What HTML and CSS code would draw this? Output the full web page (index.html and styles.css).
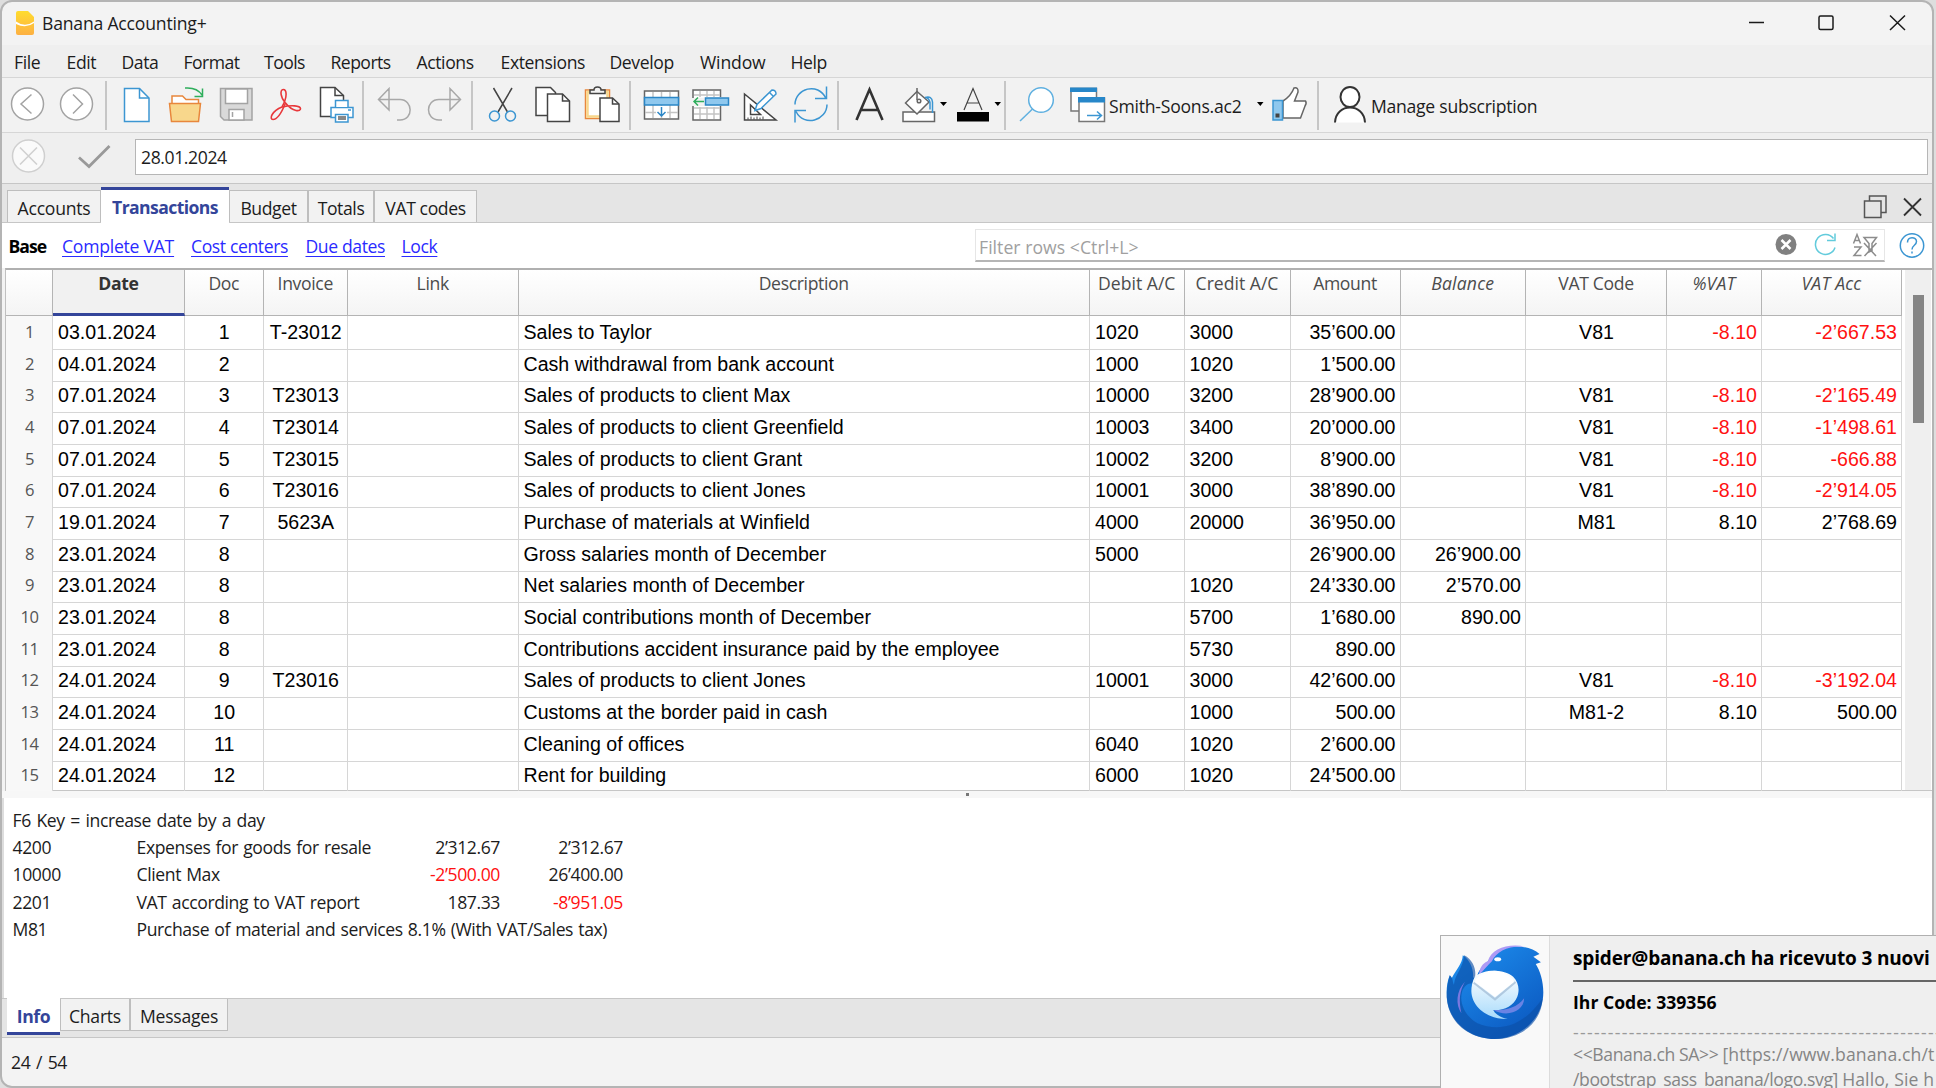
FILE: index.html
```html
<!DOCTYPE html>
<html lang="en">
<head>
<meta charset="utf-8">
<title>Banana Accounting+</title>
<link rel="stylesheet" href="styles.css">
</head>
<body>
<div class="window">
  <header class="titlebar">
    <svg class="logo" viewBox="15 9 20 26" width="20" height="26"><defs><linearGradient id="ban" x1="0" y1="0" x2="0" y2="1"><stop offset="0" stop-color="#ffdc2e"/><stop offset="1" stop-color="#fdb043"/></linearGradient></defs><path d="M18 10h10l6 6v16q0 2-2 2H18q-2 0-2-2V12q0-2 2-2z" fill="url(#ban)"/><path d="M16 20.500q9 6.500 18 0v1.500q-8 6-18 1z" fill="#fff"/></svg>
    <h1>Banana Accounting+</h1>
    <svg class="winbtns" viewBox="1740 8 170 30" width="170" height="30" fill="none" stroke="#1a1a1a" stroke-width="1.500"><path d="M1749 22.500h15"/><rect x="1819" y="16" width="14" height="13.500" rx="1.500"/><path d="M1890 15.500l15 14.500M1905 15.500l-15 14.500"/></svg>
  </header>
  <nav class="menu"><span>File</span><span>Edit</span><span>Data</span><span class="tight">Format</span><span class="tight">Tools</span><span class="tight">Reports</span><span>Actions</span><span>Extensions</span><span>Develop</span><span class="loose">Window</span><span>Help</span></nav>
  <div class="toolbar">
    <svg viewBox="2 78 103 54" width="103" height="54" fill="#fff" stroke="#a3a3a3" stroke-width="1.500"><circle cx="27.500" cy="104" r="16"/><path d="M31.500 94.500L21 104l10.500 9.500" fill="none"/><circle cx="76.500" cy="104" r="16"/><path d="M73 94.500L82.500 104 73 113.500" fill="none"/></svg>
    <i class="sep"></i>
    <svg viewBox="107 78 255 54" width="255" height="54" fill="none" stroke-width="1.500">
      <path d="M124.500 88.500h15l9.500 9.500v23.500h-24.500z" fill="#fff" stroke="#3c96d2"/><path d="M139.500 88.500v9.500h9.500" stroke="#3c96d2"/>
      <path d="M172 104v-8h10.500l3.500 3.500h12.500v4.500" fill="#fff" stroke="#e8873c"/><path d="M169.500 103.500h31l-2 18h-27z" fill="#f8d78c" stroke="#e8873c"/><path d="M185 88q12 -1 17 7M194.500 96.500h8v-8" stroke="#2fae5c"/>
      <path d="M220.500 88.500h31.500v31.500h-28l-3.500-3.500z" fill="#d9d9d9" stroke="#a3a3a3"/><path d="M225.500 89h22v14.500h-22zM229 109.500h15v10.500h-15z" fill="#fff" stroke="#a3a3a3"/><path d="M232.500 112v5" stroke="#a3a3a3"/>
      <g stroke="#e8383b" stroke-width="1.600"><path d="M282 107C288 96 286.500 89.500 283.200 89.500S280 97 285.500 103"/><path d="M285.500 103C293 112.500 301 111.500 300.500 108.500S291.500 105 282 107"/><path d="M285.500 103C281.500 113 277 119.500 273 119.500S271.500 111 282 107"/></g>
      <path d="M320.500 87.500h14.500l8.500 8v21h-23z" fill="#fff" stroke="#444"/><path d="M335 87.500v8h8.500" stroke="#444"/><path d="M331 107.500h22v10h-22z" fill="#fff" stroke="#3c96d2"/><path d="M335.500 107v-6.500h12.500v6.500M335.500 114.500h12.500v7.500h-12.500z" fill="#fff" stroke="#3c96d2"/><path d="M338 118h8" stroke="#888" stroke-width="4"/><path d="M348 110h3" stroke="#3c96d2"/>
    </svg>
    <i class="sep"></i>
    <svg viewBox="364 78 107 54" width="107" height="54" fill="none" stroke="#a8a8a8" stroke-width="1.500"><path d="M389 88.500v21.500l-10.500-10.500zM379 99.500h21c13 0 14 20.500 0 20.500h-3M450 88.500v21.500l10.500-10.500zM460 99.500h-21c-14 0-14 20.500 0 20.500h3"/></svg>
    <i class="sep"></i>
    <svg viewBox="473 78 156 54" width="156" height="54" fill="none" stroke="#444" stroke-width="1.500">
      <path d="M493.500 88l14 24M512 88l-14 24"/><g stroke="#3c96d2"><circle cx="494.500" cy="116" r="5"/><circle cx="510.500" cy="116" r="5"/></g>
      <path d="M536 87.500h14.500l5 5v23h-19.500z" fill="#fff"/><path d="M547.500 94h15l7 7v20.500h-22z" fill="#fff"/><path d="M562.500 94v7h7"/>
      <path d="M585.500 90h24v28.500h-24z" fill="#fff" stroke="#e8873c"/><path d="M587.500 92h20v24.500h-20z" stroke="#f8d78c" stroke-width="2.500"/><path d="M590 93.500v-3.500h4q0-3 3.500-3t3.500 3h4v3.500z" fill="#f3f3f3"/><path d="M600 98h12.500l6.500 6v17.500h-19z" fill="#fff"/><path d="M612.500 98v6h6.500"/>
    </svg>
    <i class="sep"></i>
    <svg viewBox="631 78 206 54" width="206" height="54" fill="none" stroke="#666" stroke-width="1.500">
      <path d="M644.500 91h34v28h-34z" fill="#fff"/><path d="M653 92v26M661.500 92v26M670 92v26M645 112.500h33" stroke="#c4c4c4"/><path d="M656 106h11v10h-11z" fill="#fff" stroke="none"/><path d="M644.500 97.500h34v7.500h-34z" fill="#8fc8ee" stroke="#2b86c6"/><path d="M661.500 107v9M657.500 112l4 4 4-4" stroke="#2b86c6"/>
      <path d="M693 98v-8h27.500v7M693 106v14h27.500v-14" fill="#fff"/><path d="M700 91v6M707 91v6M714 91v6M700 107v12M707 107v12M714 107v12M694 95h26M694 108h26M694 114h26" stroke="#c4c4c4"/><path d="M705.500 98h23v7h-23z" fill="#8fc8ee" stroke="#2b86c6"/><path d="M704 101.500h-10M698 97.500l-4 4 4 4" stroke="#2fae5c"/>
      <path d="M744.500 94v26h31.500z" fill="#fff" stroke="#444"/><path d="M750.500 105v9.500h10z" stroke="#444"/><path d="M748 117.500v2M751 116.500v3M754 117.500v2M757 116.500v3M760 117.500v2M763 116.500v3" stroke="#444" stroke-width="1"/><path d="M755 110.500l2-6 15-14.500q4 0 4 4l-15 14.500zM769.500 92.500l4 4" fill="#fff" stroke="#3c96d2"/>
      <path d="M795 104.500c0-16 23-23 31-6M815 98.500h11.500v-12M827 104.500c0 16-23 23-31 7M806 110.500h-11v12" stroke="#3c96d2"/>
    </svg>
    <i class="sep"></i>
    <svg viewBox="839 78 165 54" width="165" height="54" fill="none" stroke="#666" stroke-width="1.500">
      <path d="M856.500 120l13-30.500 13 30.500M861 110h17" stroke="#333" stroke-width="2.600"/>
      <path d="M903 112h31.500v9.500h-31.500z" fill="#fff"/><path d="M905.500 103l11.500-11.500 12 10.500-12 12z" fill="#fff"/><path d="M917 88v12" /><circle cx="919" cy="101" r="1.800"/><path d="M925 97.500q7-2 7.500 4.500v11M925 97.500q4 0 5 5v7" stroke="#3c96d2"/>
      <path d="M940 102h7l-3.500 4z" fill="#000" stroke="none"/>
      <path d="M964 110l9-21.500 9 21.500M966.500 103h13" stroke="#444" stroke-width="1.200"/><path d="M957 112h32v9.500h-32z" fill="#000" stroke="none"/><path d="M994.500 102h6.500l-3.200 4z" fill="#000" stroke="none"/>
    </svg>
    <i class="sep"></i>
    <svg viewBox="1006 78 102 54" width="102" height="54" fill="none" stroke-width="1.500">
      <circle cx="1041" cy="100" r="12.300" fill="#fff" stroke="#5fb0e0"/><path d="M1032.500 109l-12.500 12" stroke="#5fb0e0"/>
      <path d="M1071 88.500h25.500v22.500h-25.500z" fill="#fff" stroke="#777"/><path d="M1070 87.500h27v4.500h-27z" fill="#2787c9"/><path d="M1079 98h25.500v23.500h-25.500z" fill="#fff" stroke="#777"/><path d="M1078 97h27v5.500h-27z" fill="#2787c9"/><path d="M1087 115.500h14M1097 111.500l4.500 4-4.500 4" stroke="#3c96d2"/>
    </svg>
    <span class="file">Smith-Soons.ac2</span>
    <svg viewBox="1252 78 65 54" width="65" height="54" fill="none" stroke="#666" stroke-width="1.500">
      <path d="M1257 102h6.500l-3.200 4z" fill="#000" stroke="none"/><path d="M1283 101q8-5 11-13 4.500-1 4 4l-3.500 9h11q1.500 2-.5 5l-4.500 12h-17.500z" fill="#fff"/><path d="M1273 100.500h9.500v19.500h-9.500z" fill="#8fc8ee" stroke="#3c96d2"/><path d="M1275.500 113.500h4v4h-4z" fill="#444" stroke="none"/>
    </svg>
    <i class="sep"></i>
    <svg viewBox="1319 78 51 54" width="51" height="54" fill="#fff" stroke="#333" stroke-width="2"><path d="M1335 122.500c1-20 29-20 30 0"/><ellipse cx="1350" cy="97" rx="9.500" ry="10"/></svg>
    <span class="sub">Manage subscription</span>
  </div>
  <div class="editbar">
    <svg viewBox="2 133 133 50" width="133" height="50" fill="none" stroke="#cfcfcf" stroke-width="1.500"><circle cx="28.500" cy="156" r="16" fill="#fafafa"/><path d="M20 147.500l17 17M37 147.500l-17 17"/><path d="M79 157.500l10 9 20.500-20.500" stroke="#999" stroke-width="2.800"/></svg>
    <div class="cellinput">28.01.2024</div>
  </div>
  <div class="tabs">
    <span class="tab t1">Accounts</span><span class="tab t2 on">Transactions</span><span class="tab t3">Budget</span><span class="tab t4">Totals</span><span class="tab t5">VAT codes</span>
    <svg viewBox="1860 184 68 38" width="68" height="38" fill="none" stroke="#555" stroke-width="1.500"><path d="M1864.500 201h16.500v16.500h-16.500zM1869.500 200.500v-4.500h16.500v16.500h-4.500"/><path d="M1904 198.500l17 17M1921 198.500l-17 17" stroke="#333" stroke-width="1.800"/></svg>
  </div>
  <div class="views">
    <b>Base</b><a class="v1">Complete VAT</a><a class="v2">Cost centers</a><a class="v3">Due dates</a><a class="v4">Lock</a>
    <div class="filter"><span>Filter rows &lt;Ctrl+L&gt;</span>
      <svg viewBox="1770 230 112 30" width="112" height="30" fill="none" stroke-width="1.500"><circle cx="1784" cy="244.500" r="10.500" fill="#808080"/><path d="M1779.500 240l9 9M1788.500 240l-9 9" stroke="#fff" stroke-width="2.500"/><path d="M1831.500 238.500a10 10 0 1 0 1.500 9M1825 240.500h8v-7" stroke="#62cbdc"/><path d="M1851.500 243.500l3.500-9 3.500 9M1853 240.500h4.500M1852 247h7l-7 8.500h7.500" stroke="#8c8c8c"/><path d="M1862 237.500h12.500l-4.500 6v7l-3 1.500v-8.500zM1862.500 256l12-13M1874 256l-12-13" stroke="#8c8c8c"/></svg>
    </div>
    <svg class="help" viewBox="1899 231 26 27" width="26" height="27" fill="none" stroke="#3c96d2" stroke-width="1.500"><circle cx="1912" cy="244.500" r="11.700"/><path d="M1907.500 241.500c0-6.500 9-6 9-1 0 4-4.500 3.500-4.500 8M1912 250.500v2"/></svg>
  </div>
  <main class="gridwrap">
    <div class="sheet">
      <div class="row head"><span></span><span class="sel">Date</span><span>Doc</span><span>Invoice</span><span>Link</span><span>Description</span><span class="ac">Debit A/C</span><span class="ac">Credit A/C</span><span>Amount</span><em>Balance</em><span>VAT Code</span><em>%VAT</em><em>VAT Acc</em></div>
      <div class="row"><b>1</b><span>03.01.2024</span><span>1</span><span>T-23012</span><span></span><span>Sales to Taylor</span><span>1020</span><span>3000</span><span>35’600.00</span><span></span><span>V81</span><span class="neg">-8.10</span><span class="neg">-2’667.53</span></div>
      <div class="row"><b>2</b><span>04.01.2024</span><span>2</span><span></span><span></span><span>Cash withdrawal from bank account</span><span>1000</span><span>1020</span><span>1’500.00</span><span></span><span></span><span></span><span></span></div>
      <div class="row"><b>3</b><span>07.01.2024</span><span>3</span><span>T23013</span><span></span><span>Sales of products to client Max</span><span>10000</span><span>3200</span><span>28’900.00</span><span></span><span>V81</span><span class="neg">-8.10</span><span class="neg">-2’165.49</span></div>
      <div class="row"><b>4</b><span>07.01.2024</span><span>4</span><span>T23014</span><span></span><span>Sales of products to client Greenfield</span><span>10003</span><span>3400</span><span>20’000.00</span><span></span><span>V81</span><span class="neg">-8.10</span><span class="neg">-1’498.61</span></div>
      <div class="row"><b>5</b><span>07.01.2024</span><span>5</span><span>T23015</span><span></span><span>Sales of products to client Grant</span><span>10002</span><span>3200</span><span>8’900.00</span><span></span><span>V81</span><span class="neg">-8.10</span><span class="neg">-666.88</span></div>
      <div class="row"><b>6</b><span>07.01.2024</span><span>6</span><span>T23016</span><span></span><span>Sales of products to client Jones</span><span>10001</span><span>3000</span><span>38’890.00</span><span></span><span>V81</span><span class="neg">-8.10</span><span class="neg">-2’914.05</span></div>
      <div class="row"><b>7</b><span>19.01.2024</span><span>7</span><span>5623A</span><span></span><span>Purchase of materials at Winfield</span><span>4000</span><span>20000</span><span>36’950.00</span><span></span><span>M81</span><span>8.10</span><span>2’768.69</span></div>
      <div class="row"><b>8</b><span>23.01.2024</span><span>8</span><span></span><span></span><span>Gross salaries month of December</span><span>5000</span><span></span><span>26’900.00</span><span>26’900.00</span><span></span><span></span><span></span></div>
      <div class="row"><b>9</b><span>23.01.2024</span><span>8</span><span></span><span></span><span>Net salaries month of December</span><span></span><span>1020</span><span>24’330.00</span><span>2’570.00</span><span></span><span></span><span></span></div>
      <div class="row"><b>10</b><span>23.01.2024</span><span>8</span><span></span><span></span><span>Social contributions month of December</span><span></span><span>5700</span><span>1’680.00</span><span>890.00</span><span></span><span></span><span></span></div>
      <div class="row"><b>11</b><span>23.01.2024</span><span>8</span><span></span><span></span><span>Contributions accident insurance paid by the employee</span><span></span><span>5730</span><span>890.00</span><span></span><span></span><span></span><span></span></div>
      <div class="row"><b>12</b><span>24.01.2024</span><span>9</span><span>T23016</span><span></span><span>Sales of products to client Jones</span><span>10001</span><span>3000</span><span>42’600.00</span><span></span><span>V81</span><span class="neg">-8.10</span><span class="neg">-3’192.04</span></div>
      <div class="row"><b>13</b><span>24.01.2024</span><span>10</span><span></span><span></span><span>Customs at the border paid in cash</span><span></span><span>1000</span><span>500.00</span><span></span><span>M81-2</span><span>8.10</span><span>500.00</span></div>
      <div class="row"><b>14</b><span>24.01.2024</span><span>11</span><span></span><span></span><span>Cleaning of offices</span><span>6040</span><span>1020</span><span>2’600.00</span><span></span><span></span><span></span><span></span></div>
      <div class="row"><b>15</b><span>24.01.2024</span><span>12</span><span></span><span></span><span>Rent for building</span><span>6000</span><span>1020</span><span>24’500.00</span><span></span><span></span><span></span><span></span></div>
    </div>
    <div class="scroll"><i></i></div>
  </main>
  <div class="splitter"><i></i></div>
  <section class="info">
    <p><span class="hint">F6 Key = increase date by a day</span></p>
    <p><span>4200</span><span>Expenses for goods for resale</span><span>2’312.67</span><span>2’312.67</span></p>
    <p><span>10000</span><span>Client Max</span><span class="neg">-2’500.00</span><span>26’400.00</span></p>
    <p><span>2201</span><span>VAT according to VAT report</span><span>187.33</span><span class="neg">-8’951.05</span></p>
    <p><span>M81</span><span>Purchase of material and services 8.1% (With VAT/Sales tax)</span></p>
  </section>
  <div class="btabs"><span class="b1 on">Info</span><span class="b2">Charts</span><span class="b3">Messages</span></div>
  <footer class="status">24 / 54</footer>
</div>
<aside class="toast">
  <div class="toasticon">
    <svg viewBox="134 615 286 285" width="98" height="95" preserveAspectRatio="none"><defs><linearGradient id="tb" x1="0" y1="0" x2=".8" y2="1"><stop offset="0" stop-color="#1f93f2"/><stop offset="1" stop-color="#0b58c0"/></linearGradient><linearGradient id="env" x1="0" y1="0" x2="0" y2="1"><stop offset="0" stop-color="#fff"/><stop offset="1" stop-color="#a9dbfb"/></linearGradient></defs>
    <path d="M145 706C135 730 134 760 138 785c10 65 70 112 138 112s142-55 142-140c0-35-10-65-22-85l15-5-22-17 18-8c-30-28-95-30-125-6-10 9-22 20-30 34-15 13-25 25-27 38l-12 5c2-25-8-52-30-67-1 25-20 45-32 68z" fill="url(#tb)"/>
    <path d="M145 706c10 8 8 20 12 28 5-35 25-45 30-88 25 13 35 40 32 62l-8 22c-15 0-25 10-30 25-10 35 10 75 45 95 60 25 130 15 190-75-3 70-60 122-140 122-75 0-136-50-140-125 0-25 3-45 9-66z" fill="#0d50a8" opacity=".65"/>
    <path d="M231 704c0-20 10-34 25-40 10-38 60-55 110-44-50-4-85 14-98 44-12 12-22 25-37 40z" fill="#ad9af5"/>
    <path d="M189 725c-25 28-28 68-10 95-8-40-6-65 10-95z" fill="#7a78df"/>
    <path d="M218 710c30-25 85-22 112 0 15 14 20 40 12 60-10 28-40 42-70 40 5 12 20 22 42 27-60 2-105-37-106-83 0-15 3-30 10-44z" fill="url(#env)"/><path d="M272 810c30 2 70-5 90-35 0 40-50 58-90 35z" fill="#6a83e4"/><path d="M215 728l62 50 60-52" fill="none" stroke="#9fb9d3" stroke-width="6" opacity=".7"/><path d="M220 718q55-52 110 0l2 8-55 46-58-45z" fill="#fff"/>
    <ellipse cx="285" cy="658" rx="10" ry="6" fill="#fff"/></svg>
  </div>
  <div class="toastbody"><h2>spider@banana.ch ha ricevuto 3 nuovi</h2><h3>Ihr Code: 339356</h3><div class="dash">------------------------------------------------------</div><p>&lt;&lt;Banana.ch SA&gt;&gt; <span class="url">[https://www.banana.ch/t</span><br>/bootstrap_sass_banana/logo.svg] <span class="hallo">Hallo, Sie h</span></p></div>
</aside>
</body>
</html>
```
FILE: styles.css
```css
* { box-sizing: border-box; }
html, body { margin: 0; height: 100%; }
body { width: 1936px; height: 1088px; overflow: hidden; position: relative; background: #dedede; font: 17.6px "Open Sans", "Noto Sans", sans-serif; letter-spacing: -0.4px; color: #1c1c1c; white-space: nowrap; }
svg { display: block; flex: none; }
h1, h2, h3, p { margin: 0; font-size: inherit; font-weight: 400; }

.window { width: 1934px; height: 1088px; border: 2px solid #b4b4b4; border-radius: 12px; background: #f3f3f3; display: flex; flex-direction: column; overflow: hidden; }
.titlebar { height: 43px; flex: none; display: flex; align-items: center; padding: 0 22px 2px 13px; }
.titlebar h1 { margin-left: 7px; letter-spacing: -0.2px; }
.winbtns { margin-left: auto; }
.menu { height: 32px; flex: none; background: #efefef; display: grid; grid-template-columns: 52.500px 55px 62px 80.500px 66.500px 86px 84px 109px 90.500px 90.500px 60px; align-items: center; padding: 1px 0 0 12px; }
.tight { letter-spacing: -0.55px; }
.loose { letter-spacing: -0.15px; }
.toolbar { height: 56px; flex: none; display: flex; align-items: center; border: solid #d6d6d6; border-width: 1px 0; background: #f2f2f2; }
.sep { width: 2px; height: 49px; background: #c6c6c6; flex: none; }
.file { width: 144px; padding: 2px 0 0 1px; letter-spacing: -0.23px; }
.sub { padding: 2px 0 0 1px; letter-spacing: -0.27px; }
.editbar { height: 50px; flex: none; display: flex; background: #efefef; }
.cellinput { margin: 6px 4px 0 0; flex: 1; height: 36px; border: 1.500px solid #b6b6b6; background: #fff; padding-left: 5px; line-height: 34px; }

.tabs { height: 40px; flex: none; display: flex; align-items: flex-end; background: #e5e5e5; border: solid #c6c6c6; border-width: 1px 0; padding-left: 5px; }
.tabs svg { margin-left: auto; margin-right: 4px; }
.tab { height: 32px; border: 1px solid #bebebe; border-bottom: 0; background: #f2f2f2; line-height: 34px; text-align: center; }
.tab.on { height: 36px; margin-bottom: -1px; border: 0; border-top: 3px solid #34459a; background: #fff; color: #34459a; font-weight: 700; line-height: 35px; letter-spacing: -0.6px; }
.t1 { width: 94px; letter-spacing: -0.25px; } .t2 { width: 128px; } .t3 { width: 79px; } .t4 { width: 66px; } .t5 { width: 103px; }

.views { height: 45px; flex: none; background: #fff; display: flex; align-items: center; padding-left: 6.500px; }
.views b { width: 53.500px; color: #000; letter-spacing: -1px; }
.views a { color: #2a2aff; text-decoration: underline; text-underline-offset: 3px; }
.v1 { width: 129px; letter-spacing: -0.25px; } .v2 { width: 114.500px; } .v3 { width: 96px; } .v4 { width: 60px; }
.filter { margin-left: auto; width: 910px; height: 33px; border: 1px solid #e6e6e6; border-bottom: 2px solid #b5b5b5; display: flex; justify-content: space-between; align-items: center; color: #a0a0a0; padding-left: 3px; }
.filter span { letter-spacing: 0.05px; padding-top: 3px; }
.help { margin: 0 7px 0 14px; }

.gridwrap { height: 523px; flex: none; background: #fff; display: flex; border-top: 2px solid #b0b0b0; margin-left: 3px; border-left: 1px solid #c0c0c0; border-bottom: 1px solid #c6c6c6; }
.sheet { width: 1896px; }
.row { display: grid; grid-template-columns: 47px 132px 78.500px 84.500px 170.500px 571.500px 94.500px 106px 110px 125.500px 141px 95px 1fr; height: 31.660px; font: 19.600px "Liberation Sans", Arial, sans-serif; letter-spacing: 0; line-height: 33px; color: #000; }
.row > * { border: solid #d6d6d6; border-width: 0 1.500px 1.500px 0; padding: 0 4px 0 5px; }
.row > b { font: 16.600px/31.500px "Open Sans", sans-serif; letter-spacing: -0.5px; color: #555; text-align: center; background: #f8f8f8; }
.row > :nth-child(3), .row > :nth-child(4), .row > :nth-child(11) { text-align: center; }
.row > :nth-child(n+9):not(:nth-child(11)) { text-align: right; }
.row > .neg, .info .neg { color: #f11; }
.head.row { height: 46px; font: 17.6px/27px "Open Sans", sans-serif; letter-spacing: -0.35px; color: #4c4c4c; background: linear-gradient(#fff, #f4f4f4); }
.head.row > :nth-child(n) { text-align: center; padding: 0; border-width: 0 1.500px 1.500px 0; border-color: #b4b4b4; }
.head em { letter-spacing: 0.2px; }
.head .ac { letter-spacing: 0; }
.head .sel { font-weight: 700; color: #333; background: #f1f1f1; }
.head.row > .sel { border-bottom: 3px solid #34459a; }
.scroll { width: 26px; margin-left: 3px; background: #efefef; display: flex; justify-content: center; padding-top: 25px; }
.scroll i { width: 11px; height: 128px; background: #858585; }
.splitter { height: 7px; flex: none; background: #f7f7f7; display: flex; justify-content: center; align-items: center; }
.splitter i { width: 3px; height: 3px; background: #777; }

.info { height: 200px; flex: none; background: #fff; border-left: 2px solid #ddd; padding: 9px 0 0 8.500px; word-spacing: 1px; }
.info p { height: 27.200px; display: grid; grid-template-columns: 124px 240px 123.500px 123px; line-height: 27px; }
.info p span:nth-child(n+3) { text-align: right; }
.hint { word-spacing: 1.400px; }
.btabs { height: 40px; flex: none; display: flex; background: #e5e5e5; border: solid #c6c6c6; border-width: 1px 0; padding-left: 5px; }
.btabs span { height: 32px; border: 1px solid #bebebe; border-top: 0; background: #f2f2f2; text-align: center; line-height: 34px; letter-spacing: -0.25px; }
.btabs .on { margin-top: -1px; height: 37px; border: 0; border-bottom: 3px solid #34459a; background: #fff; color: #34459a; font-weight: 700; line-height: 36px; letter-spacing: -0.4px; }
.b1 { width: 53px; } .b2 { width: 70px; } .b3 { width: 98px; }
.status { flex: 1; line-height: 49px; padding-left: 9px; word-spacing: 1.500px; }

.toast { position: absolute; left: 1440px; top: 935px; width: 496px; height: 153px; border: solid #b0b0b0; border-width: 1px 0 0 1px; background: #efefef; display: flex; overflow: hidden; color: #000; }
.toasticon { width: 109px; flex: none; background: #f9f9f9; border-right: 1px solid #dcdcdc; padding: 9px 0 0 5px; }
.toastbody { margin-left: 23px; flex: none; width: 400px; }
.toastbody h2 { height: 46px; line-height: 45px; border-bottom: 2px solid #666; font-weight: 700; font-size: 19px; letter-spacing: -0.15px; }
.toastbody h3 { height: 44px; line-height: 40px; font-weight: 700; letter-spacing: 0; }
.dash { height: 16px; line-height: 12px; color: #999; letter-spacing: 1.300px; }
.toastbody p { line-height: 24.500px; color: #858585; }
.url { letter-spacing: 0.1px; }
.hallo { letter-spacing: 0.1px; }
```
